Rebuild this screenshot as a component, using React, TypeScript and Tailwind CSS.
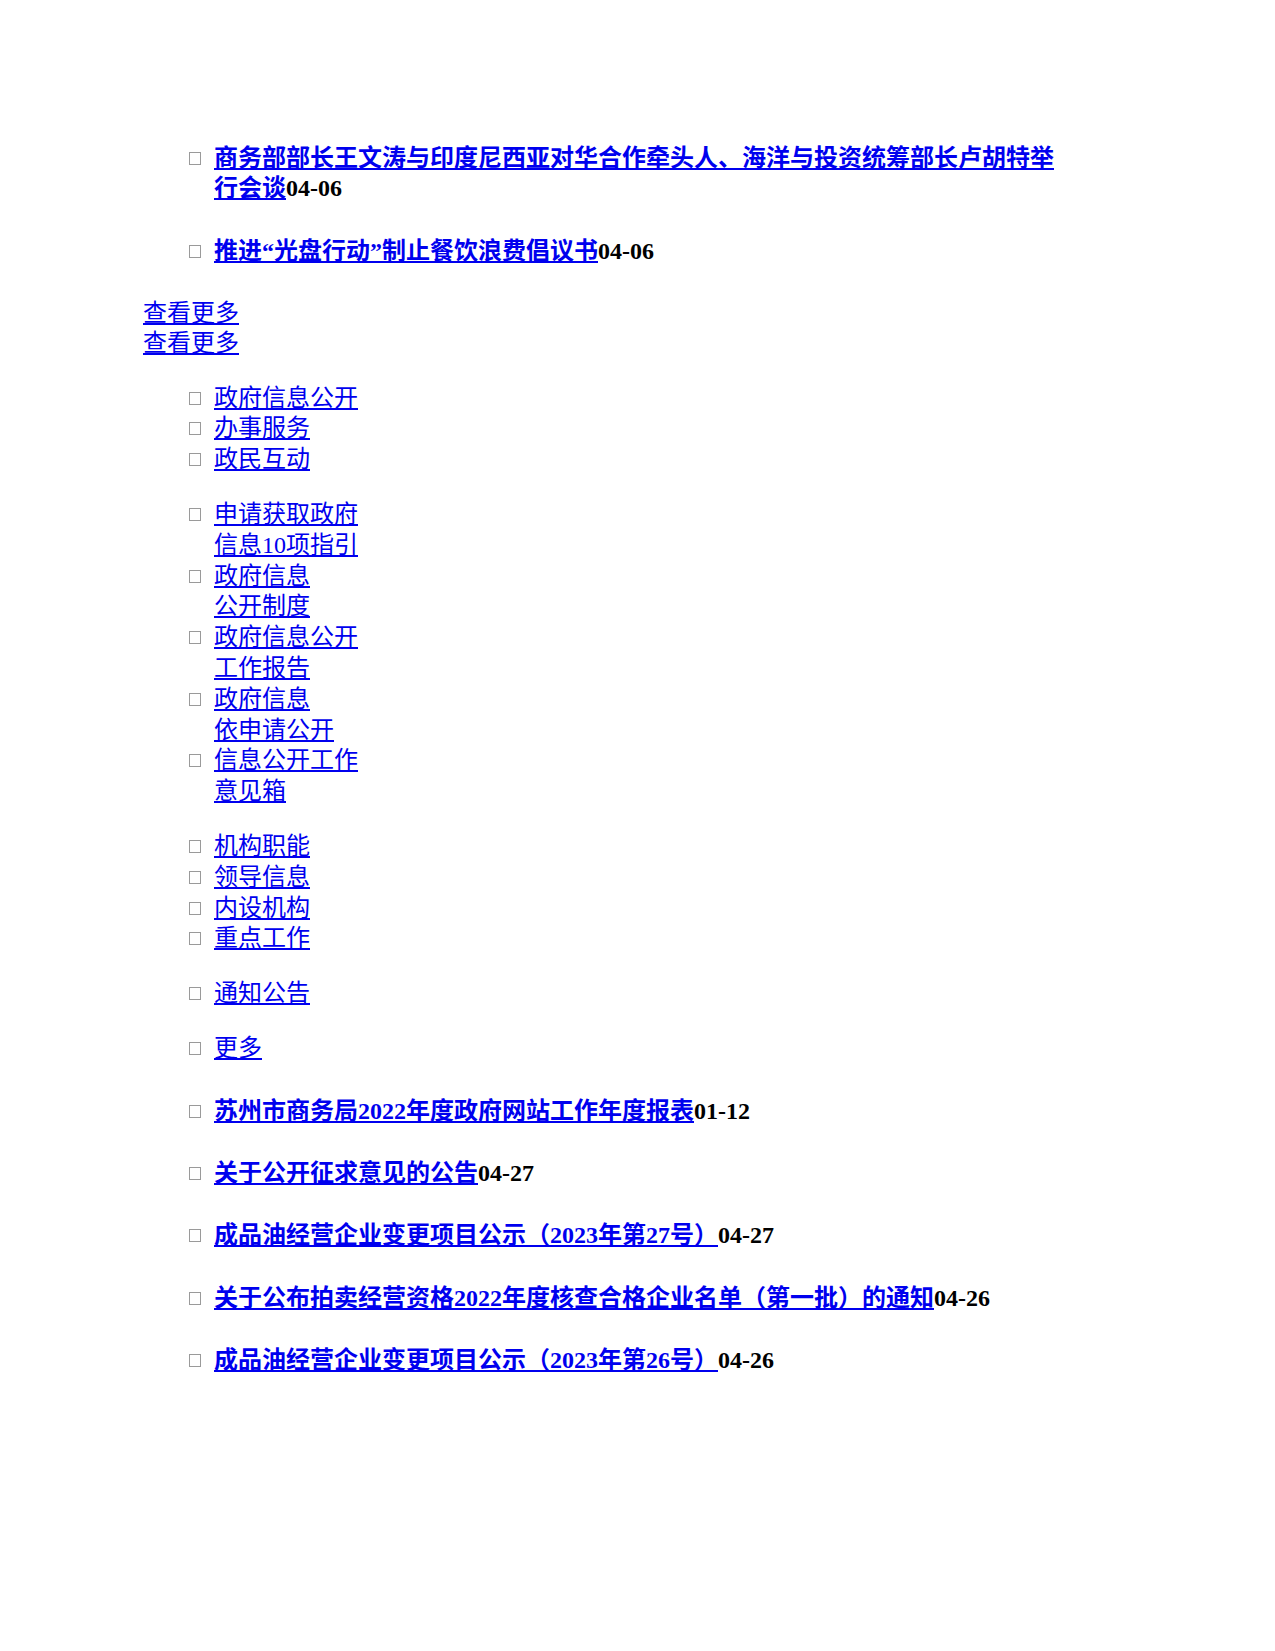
const topNews = [
  { title: "商务部部长王文涛与印度尼西亚对华合作牵头人、海洋与投资统筹部长卢胡特举行会谈", date: "04-06" },
  { title: "推进“光盘行动”制止餐饮浪费倡议书", date: "04-06" },
];

const notices = [
  { title: "苏州市商务局2022年度政府网站工作年度报表", date: "01-12" },
  { title: "关于公开征求意见的公告", date: "04-27" },
  { title: "成品油经营企业变更项目公示（2023年第27号）", date: "04-27" },
  { title: "关于公布拍卖经营资格2022年度核查合格企业名单（第一批）的通知", date: "04-26" },
  { title: "成品油经营企业变更项目公示（2023年第26号）", date: "04-26" },
];

const navMain = ["政府信息公开", "办事服务", "政民互动"];
const navOpen = [
  ["申请获取政府", "信息10项指引"],
  ["政府信息", "公开制度"],
  ["政府信息公开", "工作报告"],
  ["政府信息", "依申请公开"],
  ["信息公开工作", "意见箱"],
];
const navOrg = ["机构职能", "领导信息", "内设机构", "重点工作"];

function Marker() {
  return <span className="mt-[9px] mr-[13px] h-[13px] w-[12px] shrink-0 border border-[#9a9a9a]" />;
}

function NewsList({ items }: { items: { title: string; date: string }[] }) {
  return (
    <ul className="flex flex-col gap-[31.5px] pl-[46px] font-bold">
      {items.map((n) => (
        <li key={n.title} className="flex">
          <Marker />
          <div className="max-w-[850px]">
            <a href="#" className="text-[#0000ee] underline">{n.title}</a>
            <span className="text-black">{n.date}</span>
          </div>
        </li>
      ))}
    </ul>
  );
}

function NavList({ items }: { items: string[][] }) {
  return (
    <ul className="pl-[46px]">
      {items.map((lines) => (
        <li key={lines.join("")} className="flex">
          <Marker />
          <a href="#" className="text-[#0000ee] underline">
            {lines.map((l, i) => (
              <span key={i} className="block w-fit underline">{l}</span>
            ))}
          </a>
        </li>
      ))}
    </ul>
  );
}

export default function App() {
  return (
    <div
      className="min-h-[1651px] bg-white pt-[142.6px] pl-[143px] text-[24px] leading-[30.8px] text-black"
      style={{ fontFamily: '"Liberation Serif", "Noto Sans CJK SC", serif' }}
    >
      <NewsList items={topNews} />

      <div className="mt-[31.2px]">
        <a href="#" className="block w-fit text-[#0000ee] underline">查看更多</a>
        <a href="#" className="block w-fit text-[#0000ee] underline">查看更多</a>
      </div>

      <div className="mt-[23.4px] flex flex-col gap-[24px]">
        <NavList items={navMain.map((t) => [t])} />
        <NavList items={navOpen} />
        <NavList items={navOrg.map((t) => [t])} />
        <NavList items={[["通知公告"]]} />
        <NavList items={[["更多"]]} />
      </div>

      <div className="mt-[32px]">
        <NewsList items={notices} />
      </div>
    </div>
  );
}
